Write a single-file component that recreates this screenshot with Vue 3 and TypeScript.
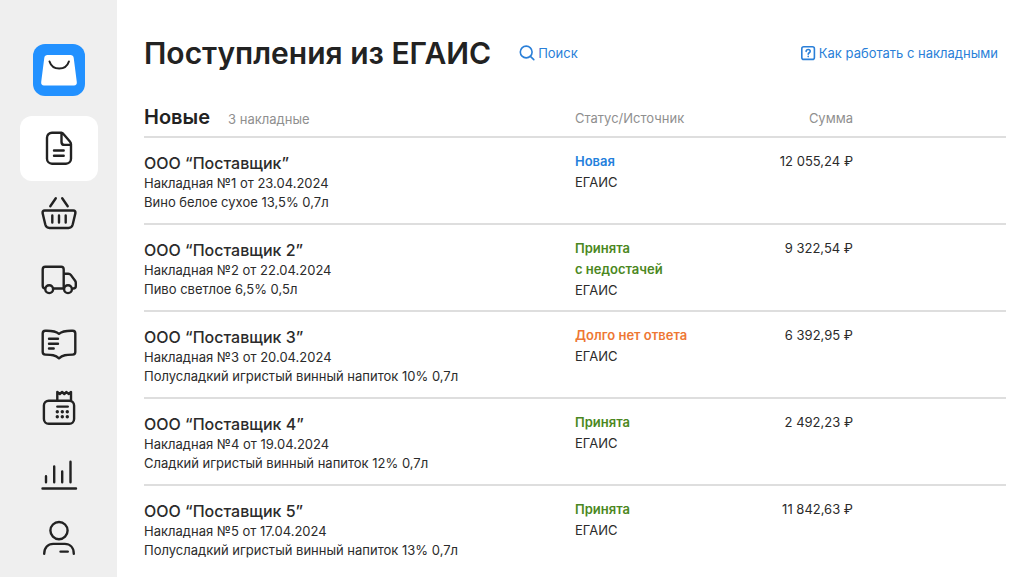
<script setup lang="ts">
interface Invoice {
  supplier: string
  number: number
  date: string
  goods: string
  status: string[]
  tone: 'new' | 'accepted' | 'waiting'
  source: string
  sum: string
}

interface Section {
  id: string
  label: string
  active?: boolean
}

const sections: Section[] = [
  { id: 'docs', label: 'Документы', active: true },
  { id: 'basket', label: 'Продажи' },
  { id: 'truck', label: 'Поставки' },
  { id: 'book', label: 'Каталог' },
  { id: 'cashbox', label: 'Кассы' },
  { id: 'chart', label: 'Отчёты' },
  { id: 'user', label: 'Профиль' },
]

const invoices: Invoice[] = [
  { supplier: 'ООО “Поставщик”', number: 1, date: '23.04.2024', goods: 'Вино белое сухое 13,5% 0,7л', status: ['Новая'], tone: 'new', source: 'ЕГАИС', sum: '12 055,24 ₽' },
  { supplier: 'ООО “Поставщик 2”', number: 2, date: '22.04.2024', goods: 'Пиво светлое 6,5% 0,5л', status: ['Принята', 'с недостачей'], tone: 'accepted', source: 'ЕГАИС', sum: '9 322,54 ₽' },
  { supplier: 'ООО “Поставщик 3”', number: 3, date: '20.04.2024', goods: 'Полусладкий игристый винный напиток 10% 0,7л', status: ['Долго нет ответа'], tone: 'waiting', source: 'ЕГАИС', sum: '6 392,95 ₽' },
  { supplier: 'ООО “Поставщик 4”', number: 4, date: '19.04.2024', goods: 'Сладкий игристый винный напиток 12% 0,7л', status: ['Принята'], tone: 'accepted', source: 'ЕГАИС', sum: '2 492,23 ₽' },
  { supplier: 'ООО “Поставщик 5”', number: 5, date: '17.04.2024', goods: 'Полусладкий игристый винный напиток 13% 0,7л', status: ['Принята'], tone: 'accepted', source: 'ЕГАИС', sum: '11 842,63 ₽' },
]
</script>

<template>
  <div class="app">
    <aside class="sidebar">
      <a class="logo" href="#" aria-label="Главная">
        <svg viewBox="0 0 52 52" width="52" height="52" aria-hidden="true">
          <rect width="52" height="52" rx="12" fill="#2291ff" />
          <path d="M14.500 11h23c1.800 0 2.900 1 3.200 2.700l3.100 24.300c.3 2.200-.8 3.500-2.800 3.500H11c-2 0-3.100-1.300-2.800-3.500l3.100-24.300C11.600 12 12.700 11 14.500 11z" fill="#fff" />
          <path d="M16.500 17.500c1.400 4.400 5.100 7 9.700 7s8.300-2.600 9.700-7" fill="none" stroke="#222" stroke-width="2" stroke-linecap="round" />
        </svg>
      </a>
      <nav class="nav">
        <a v-for="s in sections" :key="s.id" href="#" class="nav-link" :class="{ active: s.active }" :aria-label="s.label">
          <svg class="icon" viewBox="0 0 40 40" width="40" height="40" aria-hidden="true">
            <template v-if="s.id === 'docs'">
              <path d="M22.500 3.700H13a5 5 0 0 0-5 5v21a5 5 0 0 0 5 5h14a5 5 0 0 0 5-5V15.200c0-1-.4-1.900-1.100-2.700l-6.700-7.700c-.5-.7-1-1.100-1.700-1.100zv9.200c0 2 1 3 3 3H32" />
              <path d="M15 21.500h9.700M15 26.700h9.700" />
            </template>
            <template v-else-if="s.id === 'basket'">
              <path d="M16.800 4.300l-5.500 8M23.200 4.300l5.500 8M13.300 21.500v7M20 21.500v7M26.700 21.500v7" />
              <path d="M5.700 16.500h28.600c1.700 0 2.400 1 2.100 2.600l-2.700 11.400c-.6 2.300-1.900 3.500-4.200 3.500h-19c-2.300 0-3.600-1.200-4.200-3.500L3.600 19.100c-.3-1.600.4-2.600 2.100-2.600z" />
            </template>
            <template v-else-if="s.id === 'truck'">
              <path d="M6 29.500c-1.500-.2-2.300-1.200-2.300-2.700V10.400c0-1.700.9-2.600 2.600-2.600h15.800c1.700 0 2.600.9 2.600 2.600v19.100M14.300 29.500h10.400M24.700 14.700h4.600c1.100 0 1.900.4 2.500 1.200l4.300 5.800c.5.700.7 1.300.7 2.100v3.500c0 1.300-.9 2.200-2.700 2.200" />
              <circle cx="10.200" cy="30.200" r="3.900" />
              <circle cx="29" cy="30.200" r="3.900" />
            </template>
            <template v-else-if="s.id === 'book'">
              <path d="M20 9.800C16.500 6.800 13 6.500 6.300 6.700 4.600 6.800 3.700 7.600 3.700 9.300v18.600c0 1.700.9 2.600 2.600 2.700 6.400.2 10 .3 13.700 3.700 3.700-3.400 7.300-3.500 13.700-3.700 1.700-.1 2.600-1 2.600-2.700V9.300c0-1.700-.9-2.500-2.600-2.600C27 6.500 23.500 6.800 20 9.800z" />
              <path d="M10 14.800h9M10 19.700h9M10 24.500h4.700" />
            </template>
            <template v-else-if="s.id === 'cashbox'">
              <rect x="4.900" y="11.700" width="30.200" height="23" rx="4.800" />
              <path d="M18.300 11.700V3l2.500 2 2.300-2 2.200 2 2.200-2 2.100 2 2.400-2v8.700M18.300 17.600h10.500" />
              <g class="keys">
                <circle cx="18.300" cy="22.700" r="1.700" /><circle cx="23.300" cy="22.700" r="1.700" /><circle cx="28.300" cy="22.700" r="1.700" />
                <circle cx="18.300" cy="27.800" r="1.700" /><circle cx="23.300" cy="27.800" r="1.700" /><circle cx="28.300" cy="27.800" r="1.700" />
              </g>
            </template>
            <template v-else-if="s.id === 'chart'">
              <path d="M7 22.300v5.900M15.200 12.500v15.700M23.200 17.400v10.800M31.500 7.800v20.400M3.500 34.500h33.500" />
            </template>
            <template v-else>
              <circle cx="20" cy="11.600" r="8.600" />
              <path d="M5.200 34.800c0-6.300 3.800-9.900 9-9.900h11.600c5.200 0 9 3.600 9 9.900M21.500 32.600h7.300" />
            </template>
          </svg>
        </a>
      </nav>
    </aside>

    <main class="content">
      <header class="header">
        <h1>Поступления из ЕГАИС</h1>
        <button type="button" class="action">
          <svg viewBox="0 0 16 16" width="16" height="16" aria-hidden="true">
            <circle cx="7.200" cy="7" r="5.900" /><path d="M11.400 11.400l3.400 3.200" />
          </svg>
          Поиск
        </button>
        <a href="#" class="action help">
          <svg viewBox="0 0 16 16" width="16" height="16" aria-hidden="true">
            <rect x="1.800" y="1.800" width="12.600" height="12.600" rx="2" />
            <path d="M6.100 6.400c.1-1.200.9-1.900 2.100-1.900 1.100 0 2 .7 2 1.700 0 1.600-2 1.500-2 3.100M8.200 11.300v.3" />
          </svg>
          Как работать с накладными
        </a>
      </header>

      <table class="invoices">
        <colgroup>
          <col class="col-doc"><col class="col-status"><col>
        </colgroup>
        <thead>
          <tr>
            <th scope="col"><span class="group">Новые</span><span class="count">3 накладные</span></th>
            <th scope="col">Статус/Источник</th>
            <th scope="col" class="sum">Сумма</th>
          </tr>
        </thead>
        <tbody>
          <tr v-for="i in invoices" :key="i.number">
            <td class="doc">
              <div class="supplier">{{ i.supplier }}</div>
              <div>Накладная №{{ i.number }} от {{ i.date }}</div>
              <div>{{ i.goods }}</div>
            </td>
            <td class="state">
              <div v-for="line in i.status" :key="line" class="status" :class="i.tone">{{ line }}</div>
              <div>{{ i.source }}</div>
            </td>
            <td class="sum">{{ i.sum }}</td>
          </tr>
        </tbody>
      </table>
    </main>
  </div>
</template>

<style>
body {
  margin: 0;
  background: #fff;
}
</style>

<style scoped>
.app {
  display: flex;
  min-height: 100vh;
  font-family: Inter, Roboto, "Liberation Sans", sans-serif;
  font-size: 13px;
  line-height: 19px;
  color: #2b2b2b;
}

.sidebar {
  flex: none;
  display: flex;
  flex-direction: column;
  align-items: center;
  gap: 20px;
  width: 117px;
  padding-top: 44px;
  box-sizing: border-box;
  background: #efefef;
}

.logo,
.logo svg {
  display: block;
}

.nav {
  display: flex;
  flex-direction: column;
}

.nav-link {
  display: flex;
  align-items: center;
  justify-content: center;
  width: 78px;
  height: 65px;
  border-radius: 12px;
}

.nav-link.active {
  background: #fff;
}

.icon {
  fill: none;
  stroke: #222;
  stroke-width: 2.4;
  stroke-linecap: round;
  stroke-linejoin: round;
}

.keys {
  fill: #222;
  stroke: none;
}

.content {
  flex: 1;
  min-width: 0;
  padding: 33px 18px 0 27px;
}

.header {
  display: flex;
  align-items: center;
  height: 40px;
  padding-right: 8px;
}

h1 {
  margin: 0 28px 0 0;
  font-size: 30px;
  font-weight: 600;
  line-height: 40px;
  white-space: nowrap;
  color: #222;
}

.action {
  display: flex;
  align-items: center;
  gap: 3px;
  padding: 0;
  border: 0;
  background: none;
  font: inherit;
  color: #2a7fd8;
  text-decoration: none;
  white-space: nowrap;
  cursor: pointer;
}

.action svg {
  fill: none;
  stroke: currentColor;
  stroke-width: 1.6;
  stroke-linecap: round;
}

.help {
  margin-left: auto;
}

.invoices {
  width: 100%;
  table-layout: fixed;
  border-collapse: collapse;
}

.col-doc {
  width: 50%;
}

.col-status {
  width: 18%;
}

th {
  height: 64px;
  padding: 28px 0 0;
  box-sizing: border-box;
  border-bottom: 2px solid #dedede;
  font-weight: 400;
  text-align: left;
  vertical-align: middle;
  color: #8f8f8f;
}

.group {
  margin-right: 18px;
  font-size: 20px;
  font-weight: 600;
  color: #222;
}

td {
  height: 87px;
  padding: 14px 0 0;
  box-sizing: border-box;
  border-bottom: 2px solid #dedede;
  vertical-align: top;
}

tbody tr:last-child td {
  border-bottom: 0;
}

.supplier {
  font-size: 16px;
  font-weight: 500;
  line-height: 22px;
}

.state,
td.sum {
  padding-top: 13px;
  line-height: 21px;
}

.status {
  font-weight: 600;
}

.new {
  color: #2380dc;
}

.accepted {
  color: #4b8721;
}

.waiting {
  color: #ee7733;
}

.sum {
  padding-right: 153px;
  text-align: right;
  white-space: nowrap;
}
</style>
